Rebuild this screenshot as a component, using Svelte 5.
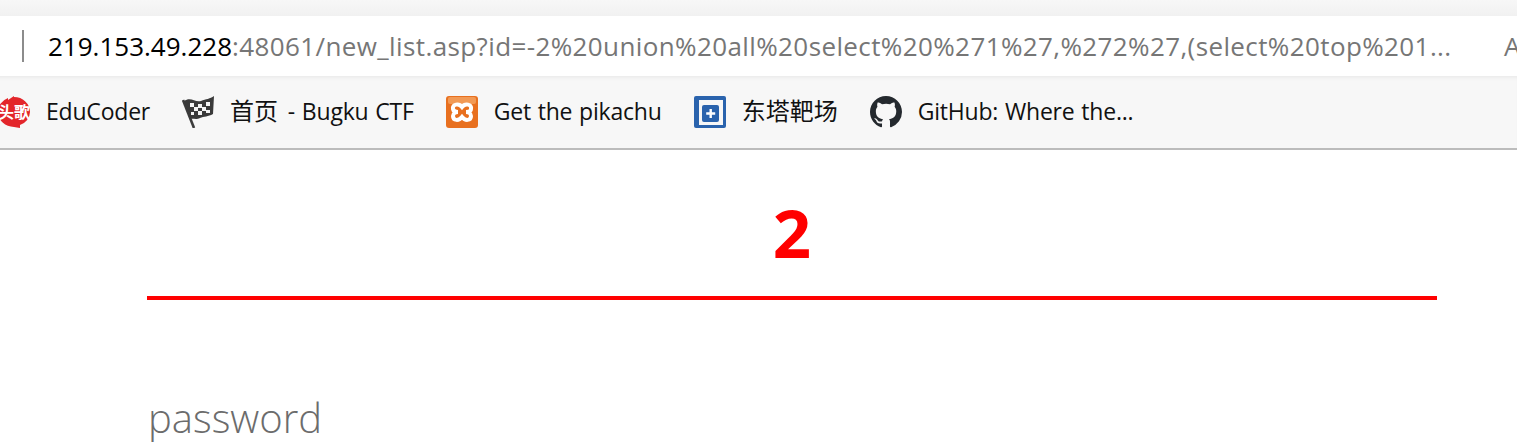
<script>
	const bookmarks = [
		{ id: 'educoder', label: 'EduCoder' },
		{ id: 'flag', cjk: '首页', label: ' - Bugku CTF' },
		{ id: 'xampp', label: 'Get the pikachu' },
		{ id: 'dongta', cjk: '东塔靶场' },
		{ id: 'github', label: 'GitHub: Where the...' }
	];
</script>

<div class="browser">
	<div class="strip"></div>
	<div class="address">
		<span class="sep"></span>
		<span class="url"><span class="host">219.153.49.228</span>:48061/new_list.asp?id=-2%20union%20all%20select%20%271%27,%272%27,(select%20top%201...</span>
		<span class="reader">A</span>
	</div>
	<div class="bookmarks">
		{#each bookmarks as b}
			<div class="bookmark">
				<svg class="icon" viewBox="0 0 32 32" aria-hidden="true">
					{#if b.id === 'educoder'}
						<path d="M16 0 L10 4 L10 2 A16 15 0 0 0 0 16 A16 15 0 0 0 16 31 L22 32 L22 29 A16 15 0 0 0 32 16 A16 15 0 0 0 16 1 Z" fill="#e3262b" />
						<text x="0" y="22" class="logo-text">头歌</text>
					{:else if b.id === 'flag'}
						<path d="M1 4 L12 32" stroke="#3c3c3c" stroke-width="2.6" fill="none" />
						<path d="M2 5 C9 0 13 7 19 5 C24 3 28 3 32 0 L31 18 C26 21 22 20 18 22 C14 24 11 22 8 23 Z" fill="#3a3a3a" />
						<path d="M8 7 h4 v4 h-4z M16 8 h4 v4 h-4z M24 6 h4 v4 h-4z M12 11 h4 v4 h-4z M20 11 h4 v4 h-4z M9 16 h3 v3 h-3z M16 15 h4 v4 h-4z M24 14 h4 v3 h-4z" fill="#f4f4f4" />
					{:else if b.id === 'xampp'}
						<rect x="0" y="0" width="32" height="32" rx="3" fill="#e8701f" />
						<rect x="2" y="1" width="28" height="7" rx="2" fill="#f29a55" />
						<path d="M16 11 C13 7 6 8 7 13 C7.5 15.5 10 16 12 16 C10 16 7 17 7 20 C7 25 13 25 16 21 C19 25 25 25 25 20 C25 17 22 16 20 16 C22 16 25 15.5 25 13 C26 8 19 7 16 11 Z" fill="#e8701f" stroke="#fff" stroke-width="4" />
					{:else if b.id === 'dongta'}
						<rect x="0" y="0" width="32" height="32" rx="2" fill="#2a63ad" />
						<rect x="5" y="4" width="24" height="25" fill="#f7f7f7" />
						<rect x="8" y="9" width="17" height="17" rx="2" fill="#2a63ad" />
						<path d="M15.5 13 h2.4 v3.3 h3.3 v2.4 h-3.3 v3.3 h-2.4 v-3.3 h-3.3 v-2.4 h3.3 z" fill="#fff" />
					{:else}
						<g transform="scale(2)">
							<path fill="#24292e" d="M8 0C3.58 0 0 3.58 0 8c0 3.54 2.29 6.53 5.47 7.59.4.07.55-.17.55-.38 0-.19-.01-.82-.01-1.49-2.01.37-2.53-.49-2.69-.94-.09-.23-.48-.94-.82-1.13-.28-.15-.68-.52-.01-.53.63-.01 1.08.58 1.23.82.72 1.21 1.87.87 2.33.66.07-.52.28-.87.51-1.07-1.78-.2-3.64-.89-3.64-3.95 0-.87.31-1.59.82-2.15-.08-.2-.36-1.02.08-2.12 0 0 .67-.21 2.2.82.64-.18 1.32-.27 2-.27.68 0 1.36.09 2 .27 1.53-1.04 2.2-.82 2.2-.82.44 1.1.16 1.92.08 2.12.51.56.82 1.27.82 2.15 0 3.07-1.87 3.75-3.65 3.95.29.25.54.73.54 1.48 0 1.07-.01 1.93-.01 2.2 0 .21.15.46.55.38A8.013 8.013 0 0016 8c0-4.42-3.58-8-8-8z" />
						</g>
					{/if}
				</svg>
				<span class="label">{#if b.cjk}<span class="cjk" class:spaced={b.label}>{b.cjk}</span>{/if}{b.label ?? ''}</span>
			</div>
		{/each}
	</div>
	<main class="page">
		<h1>2</h1>
		<hr />
		<p class="password">password</p>
	</main>
</div>

<style>
	:global(body) {
		margin: 0;
		background: #fff;
		overflow: hidden;
	}

	.browser {
		height: 442px;
		overflow: hidden;
		font-family: 'Open Sans', 'Noto Sans CJK SC', sans-serif;
	}

	.strip {
		height: 16px;
		background: linear-gradient(#f7f7f7, #f1f1f1);
	}

	.address {
		height: 60px;
		display: flex;
		align-items: center;
		background: #fff;
		white-space: nowrap;
		overflow: hidden;
	}

	.sep {
		flex: none;
		width: 2px;
		height: 32px;
		margin-left: 22px;
		background: #8c8c8c;
	}

	.url {
		margin-left: 24px;
		font-size: 26px;
		letter-spacing: 0.39px;
		color: #767676;
		width: 1456px;
		flex: none;
	}

	.host {
		color: #000;
		letter-spacing: 0;
	}

	.reader {
		flex: none;
		font-size: 26px;
		color: #767676;
	}

	.bookmarks {
		height: 72px;
		box-sizing: border-box;
		display: flex;
		align-items: center;
		gap: 32px;
		margin-left: -2px;
		background: #f7f7f7;
		box-shadow: inset 0 4px 4px -3px #e6e6e6;
		white-space: nowrap;
	}

	.bookmark {
		display: flex;
		align-items: center;
		gap: 16px;
	}

	.icon {
		width: 32px;
		height: 32px;
		flex: none;
	}

	.label {
		font-size: 23px;
		line-height: 30px;
		padding-bottom: 3px;
		word-spacing: 1px;
		letter-spacing: -0.2px;
		color: #111;
	}

	.cjk {
		font-size: 24px;
		letter-spacing: 0;
	}

	.cjk.spaced {
		margin-right: 3px;
	}

	.logo-text {
		font-size: 16px;
		font-weight: 700;
		fill: #fff;
		font-family: 'Noto Sans CJK SC', sans-serif;
	}

	.page {
		border-top: 2px solid #bcbcbc;
		padding: 0 80px 0 147px;
	}

	h1 {
		margin: 0;
		padding-top: 40px;
		text-align: center;
		font-size: 67px;
		line-height: 84px;
		font-weight: 700;
		color: #f00;
		font-family: 'Open Sans', sans-serif;
	}

	hr {
		margin: 22px 0 0;
		border: none;
		height: 4px;
		background: #f00;
	}

	.password {
		margin: 97px 0 0 1px;
		font-size: 40px;
		line-height: 42px;
		font-weight: 300;
		color: #6c6c6c;
		font-family: 'Open Sans', sans-serif;
	}
</style>
